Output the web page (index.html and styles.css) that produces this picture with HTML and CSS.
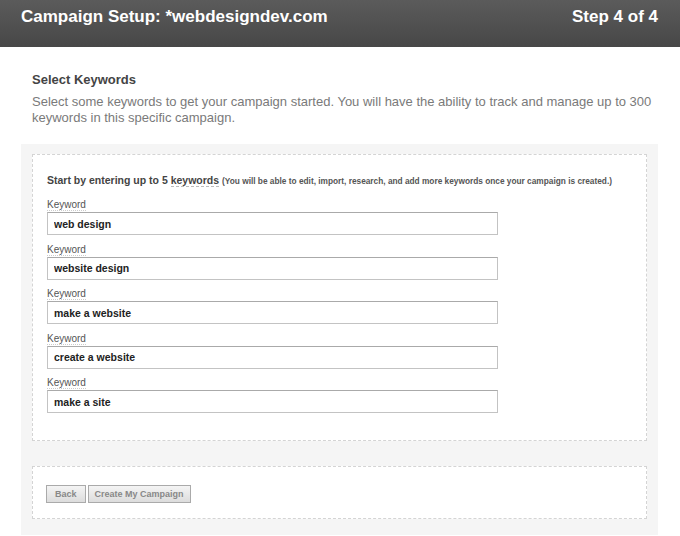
FILE: index.html
```html
<!DOCTYPE html>
<html>
<head>
  <meta name="viewport" content="width=device-width, initial-scale=1.0">
  <title>Campaign Setup</title>
  <link rel="stylesheet" href="styles.css">
</head>
<body>
  <div class="header">
    <h1>Campaign Setup: *webdesigndev.com</h1>
    <div class="step">Step 4 of 4</div>
  </div>

  <div class="intro">
    <h2>Select Keywords</h2>
    <p>Select some keywords to get your campaign started. You will have the ability to track and manage up to 300 keywords in this specific campaign.</p>
  </div>

  <div class="panel">
    <div class="box box-keywords">
      <div class="lead">Start by entering up to 5 <span class="hint">keywords</span> <small>(You will be able to edit, import, research, and add more keywords once your campaign is created.)</small></div>
      <div class="field">
        <label><span>Keyword</span></label>
        <input type="text" value="web design">
      </div>
      <div class="field">
        <label><span>Keyword</span></label>
        <input type="text" value="website design">
      </div>
      <div class="field">
        <label><span>Keyword</span></label>
        <input type="text" value="make a website">
      </div>
      <div class="field">
        <label><span>Keyword</span></label>
        <input type="text" value="create a website">
      </div>
      <div class="field">
        <label><span>Keyword</span></label>
        <input type="text" value="make a site">
      </div>
    </div>

    <div class="box box-actions">
      <button class="button button-back">Back</button>
      <button class="button">Create My Campaign</button>
    </div>
  </div>
</body>
</html>
```

FILE: styles.css
```css
body {
  margin: 0;
  font-family: 'Liberation Sans', Arial, sans-serif;
  background-color: #ffffff;
  color: #444;
}
.header {
  height: 47px;
  box-sizing: border-box;
  padding: 7px 22px 0 21px;
  display: flex;
  justify-content: space-between;
  background: linear-gradient(#5b5b5b, #474747);
  color: #ffffff;
  font-size: 17px;
  font-weight: bold;
  line-height: 20px;
}
.header h1 {
  margin: 0;
  font-size: 17px;
}
.intro {
  padding: 25px 22px 0 32px;
}
.intro h2 {
  margin: 0;
  font-size: 13px;
  line-height: 16px;
  color: #444;
}
.intro p {
  margin: 6px 0 0;
  font-size: 13px;
  line-height: 16px;
  color: #7a7a7a;
}
.panel {
  margin: 18px 22px 0 21px;
  padding: 10px 11px 16px;
  background-color: #f5f5f5;
}
.box {
  box-sizing: border-box;
  background-color: #ffffff;
  border: 1px dashed #d4d4d4;
  padding: 0 14px;
}
.box-keywords {
  height: 287px;
  padding-top: 18px;
}
.box-actions {
  margin-top: 25px;
  height: 53px;
  padding: 18px 13px 0;
  display: flex;
  align-items: flex-start;
  gap: 2px;
}
.lead {
  font-size: 10.5px;
  font-weight: bold;
  color: #444;
  line-height: 14px;
}
.lead small {
  font-size: 8.3px;
  color: #555;
}
.hint {
  border-bottom: 1px dashed #bbb;
}
.field {
  margin-top: 10px;
}
.field + .field {
  margin-top: 7.5px;
}
.field label {
  display: block;
  font-size: 10px;
  line-height: 13px;
  color: #555;
}
.field label span {
  border-bottom: 1px dotted #ccc;
}
.field input {
  display: block;
  width: 451px;
  height: 23px;
  box-sizing: border-box;
  margin-top: 1px;
  padding: 0 6px;
  border: 1px solid #c3c3c3;
  border-top-color: #aaa;
  font-family: 'Liberation Sans', Arial, sans-serif;
  font-size: 10.5px;
  font-weight: bold;
  color: #222;
  background: #fff;
}
.button {
  height: 18px;
  padding: 0 6px;
  border: 1px solid #aaa;
  background: linear-gradient(#f4f4f4, #dcdcdc);
  font-family: 'Liberation Sans', Arial, sans-serif;
  font-size: 9px;
  font-weight: bold;
  color: #888;
  cursor: pointer;
}
.button-back {
  padding: 0 8px;
}
```
